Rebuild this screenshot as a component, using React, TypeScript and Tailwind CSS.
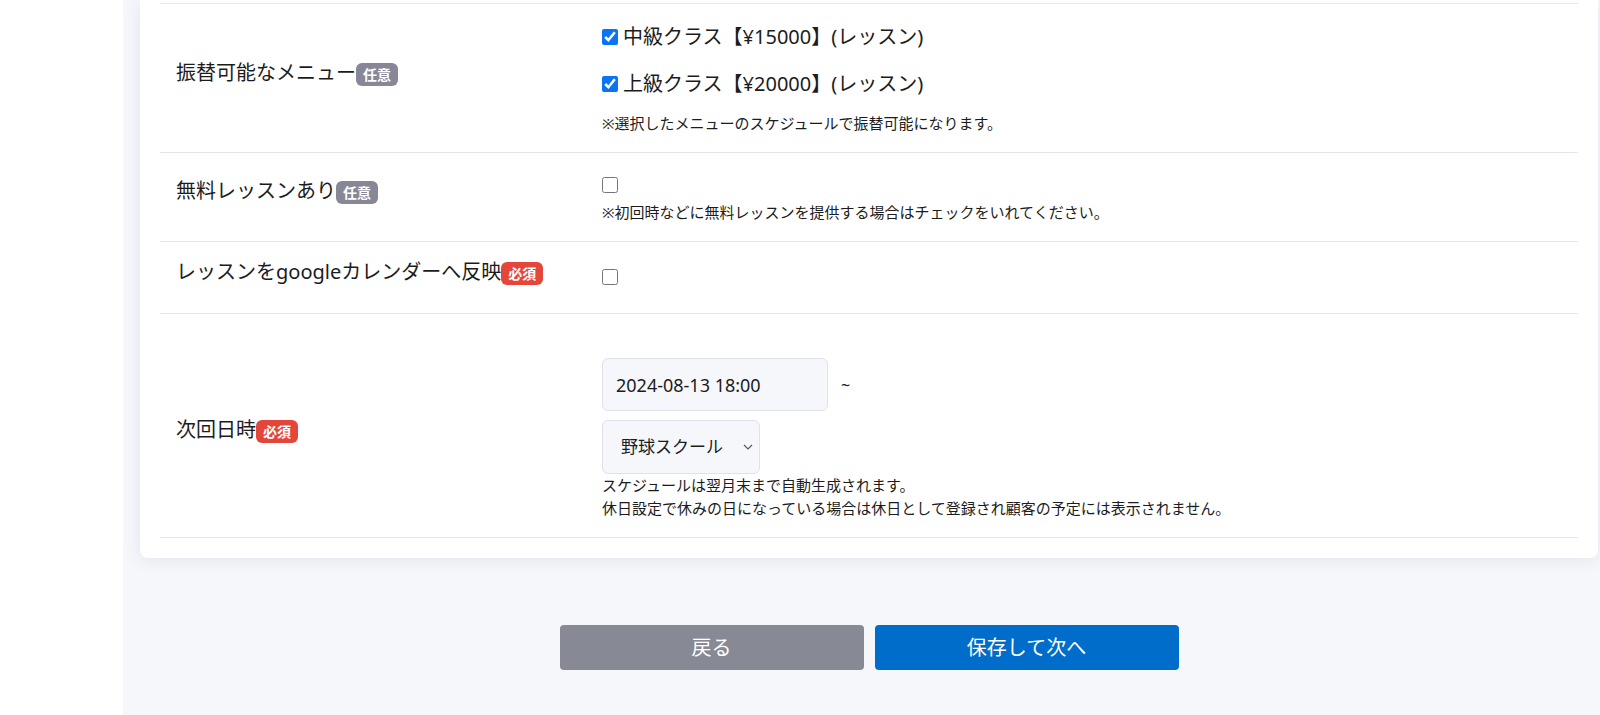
const font = "font-['Noto_Sans','Noto_Sans_CJK_JP',sans-serif]";

function Badge({ kind }: { kind: "optional" | "required" }) {
  const optional = kind === "optional";
  return (
    <span
      className={`ml-0 mt-[3px] inline-flex h-[23px] items-center rounded-[6px] px-[7px] text-[14px] font-bold leading-none text-white ${
        optional ? "bg-[#878797]" : "bg-[#e4473a]"
      }`}
    >
      {optional ? "任意" : "必須"}
    </span>
  );
}

function Label({ text, kind, shift }: { text: string; kind: "optional" | "required"; shift: string }) {
  return (
    <div className={`flex items-center pl-4 ${shift}`}>
      <span className="text-[20px] leading-[30px] text-[#1c1c1c]">{text}</span>
      <Badge kind={kind} />
    </div>
  );
}

function Check({ checked, label }: { checked?: boolean; label?: string }) {
  return (
    <label className="flex h-[30px] items-center">
      <input
        type="checkbox"
        defaultChecked={checked}
        className="m-0 h-[16px] w-[16px] accent-[#0a74f3]"
      />
      {label && <span className="ml-[5px] text-[20px] leading-[30px] text-[#1c1c1c]">{label}</span>}
    </label>
  );
}

export default function App() {
  return (
    <div className={`flex min-h-[715px] w-[1600px] overflow-hidden bg-[#f6f7fb] ${font}`}>
      {/* sidebar */}
      <aside className="w-[123px] shrink-0 bg-white" />

      <main className="flex-1 pl-[17px] pr-[2px]">
        <div className="rounded-b-[8px] bg-white px-5 pb-5 pt-[3px] shadow-[0_2px_18px_rgba(40,50,100,0.09)]">
          {/* 振替可能なメニュー */}
          <div className="grid grid-cols-[426px_1fr] border-t border-[#e5e5ef]">
            <Label text="振替可能なメニュー" kind="optional" shift="pb-[10px]" />
            <div className="pl-4 pt-[18px] pb-[18px]">
              <Check checked label="中級クラス【¥15000】(レッスン)" />
              <div className="mt-[17px]">
                <Check checked label="上級クラス【¥20000】(レッスン)" />
              </div>
              <p className="mt-[13px] text-[15px] leading-[22px] text-[#1c1c1c]">
                ※選択したメニューのスケジュールで振替可能になります。
              </p>
            </div>
          </div>

          {/* 無料レッスンあり */}
          <div className="grid grid-cols-[426px_1fr] border-t border-[#e5e5ef]">
            <Label text="無料レッスンあり" kind="optional" shift="pb-[12px]" />
            <div className="pl-4 pt-[17px] pb-[18px]">
              <Check />
              <p className="mt-[1px] text-[15px] leading-[22px] text-[#1c1c1c]">
                ※初回時などに無料レッスンを提供する場合はチェックをいれてください。
              </p>
            </div>
          </div>

          {/* googleカレンダー */}
          <div className="grid grid-cols-[426px_1fr] border-t border-[#e5e5ef]">
            <Label text="レッスンをgoogleカレンダーへ反映" kind="required" shift="pb-[11px]" />
            <div className="pl-4 pt-[20px] pb-[21px]">
              <Check />
            </div>
          </div>

          {/* 次回日時 */}
          <div className="grid grid-cols-[426px_1fr] border-y border-[#e5e5ef]">
            <Label text="次回日時" kind="required" shift="pt-[9px]" />
            <div className="pl-4 pt-[44px] pb-[17px]">
              <div className="flex items-center">
                <input
                  type="text"
                  readOnly
                  defaultValue="2024-08-13 18:00"
                  className="h-[53px] w-[226px] rounded-[6px] border border-[#dfe2ea] bg-[#f6f7fb] px-[13px] text-[18px] text-[#1c1c1c] outline-none"
                />
                <span className="ml-[13px] text-[16px] text-[#1c1c1c]">~</span>
              </div>
              <div className="relative mt-[9px] w-[158px]">
                <select className="h-[54px] w-[158px] appearance-none rounded-[6px] border border-[#dfe2ea] bg-[#f6f7fb] pl-[18px] text-[17px] text-[#1c1c1c] outline-none">
                  <option>野球スクール</option>
                </select>
                <svg
                  className="pointer-events-none absolute right-[6px] top-[23px] h-[8px] w-[12px]"
                  viewBox="0 0 12 8"
                  fill="none"
                  stroke="#555"
                  strokeWidth="1.1"
                >
                  <path d="M2 2l4 4 4-4" />
                </svg>
              </div>
              <p className="text-[15px] leading-[23px] text-[#1c1c1c]">スケジュールは翌月末まで自動生成されます。</p>
              <p className="text-[15px] leading-[23px] text-[#1c1c1c]">
                休日設定で休みの日になっている場合は休日として登録され顧客の予定には表示されません。
              </p>
            </div>
          </div>
        </div>

        {/* buttons */}
        <div className="mt-[67px] flex justify-center gap-[11px]">
          <button className="h-[45px] w-[304px] rounded-[4px] bg-[#878995] text-[20px] text-white">戻る</button>
          <button className="h-[45px] w-[304px] rounded-[4px] bg-[#016dca] text-[20px] text-white">保存して次へ</button>
        </div>
      </main>
    </div>
  );
}
